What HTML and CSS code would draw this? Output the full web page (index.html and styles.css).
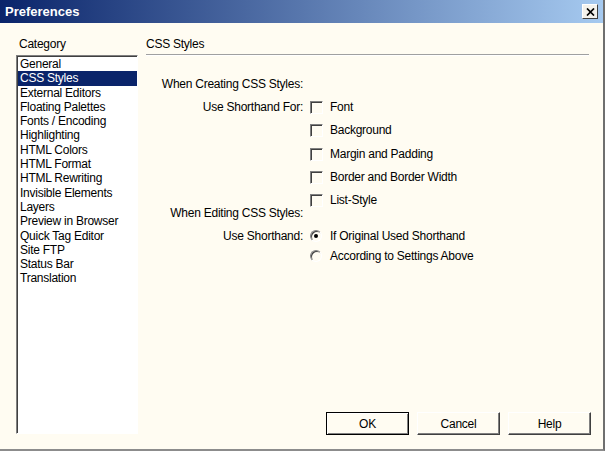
FILE: index.html
```html
<!DOCTYPE html>
<html lang="en">

<head>
    <meta charset="UTF-8">
    <meta name="viewport" content="width=device-width, initial-scale=1.0">
    <title>Preferences</title>
    <link rel="stylesheet" href="styles.css">
</head>

<body>
    <div class="window">
        <!-- Title bar -->
        <div class="titlebar">
            <span class="title">Preferences</span>
            <span class="close">
                <svg width="9" height="8" viewBox="0 0 9 8">
                    <path d="M1 0.5 L8 7.5 M8 0.5 L1 7.5" stroke="#000" stroke-width="1.7" fill="none" />
                </svg>
            </span>
        </div>

        <div class="content">
            <!-- Category list -->
            <div class="sidebar">
                <div class="caption">Category</div>
                <ul class="list">
                    <li>General</li>
                    <li class="selected">CSS Styles</li>
                    <li>External Editors</li>
                    <li>Floating Palettes</li>
                    <li>Fonts / Encoding</li>
                    <li>Highlighting</li>
                    <li>HTML Colors</li>
                    <li>HTML Format</li>
                    <li>HTML Rewriting</li>
                    <li>Invisible Elements</li>
                    <li>Layers</li>
                    <li>Preview in Browser</li>
                    <li>Quick Tag Editor</li>
                    <li>Site FTP</li>
                    <li>Status Bar</li>
                    <li>Translation</li>
                </ul>
            </div>

            <!-- Settings panel -->
            <div class="panel">
                <div class="panel-title">CSS Styles</div>

                <div class="form">
                    <div class="row">
                        <span class="label">When Creating CSS Styles:</span>
                    </div>
                    <div class="row">
                        <span class="label">Use Shorthand For:</span>
                        <span class="check"></span>
                        <span>Font</span>
                    </div>
                    <div class="row">
                        <span class="label"></span>
                        <span class="check"></span>
                        <span>Background</span>
                    </div>
                    <div class="row row-wide">
                        <span class="label"></span>
                        <span class="check"></span>
                        <span>Margin and Padding</span>
                    </div>
                    <div class="row">
                        <span class="label"></span>
                        <span class="check"></span>
                        <span>Border and Border Width</span>
                    </div>
                    <div class="row">
                        <span class="label"></span>
                        <span class="check"></span>
                        <span>List-Style</span>
                    </div>
                    <div class="row row-overlap">
                        <span class="label">When Editing CSS Styles:</span>
                    </div>
                    <div class="row">
                        <span class="label">Use Shorthand:</span>
                        <span class="radio on"></span>
                        <span>If Original Used Shorthand</span>
                    </div>
                    <div class="row row-close">
                        <span class="label"></span>
                        <span class="radio"></span>
                        <span>According to Settings Above</span>
                    </div>
                </div>

                <div class="buttons">
                    <button class="btn default">OK</button>
                    <button class="btn">Cancel</button>
                    <button class="btn">Help</button>
                </div>
            </div>
        </div>
    </div>
</body>

</html>
```

FILE: styles.css
```css
/* Base */
* {
    box-sizing: border-box;
}

body {
    margin: 0;
    font-family: "Liberation Sans", Arial, sans-serif;
    font-size: 12px;
    letter-spacing: -0.25px;
    color: #000;
    background: #fffcf2;
}

/* Dialog window */
.window {
    width: 605px;
    height: 451px;
    display: flex;
    flex-direction: column;
    background: #fffcf2;
    border-right: 2px solid #6f6f6f;
    border-bottom: 2px solid #8c8c8c;
}

/* Title bar */
.titlebar {
    flex: none;
    height: 23px;
    display: flex;
    align-items: center;
    justify-content: space-between;
    padding: 0 5px;
    background: linear-gradient(to right, #0a246a, #a6caf0);
}

.title {
    color: #fff;
    font-weight: bold;
    font-size: 13px;
    letter-spacing: 0;
}

.close {
    width: 16px;
    height: 15px;
    display: flex;
    align-items: center;
    justify-content: center;
    background: #f4f2ec;
    border: 1px solid;
    border-color: #fff #404040 #404040 #fff;
}

/* Main area */
.content {
    flex: 1;
    display: flex;
    gap: 8px;
    padding: 14px 12px 14px 16px;
}

/* Category list */
.sidebar {
    width: 122px;
    flex: none;
    display: flex;
    flex-direction: column;
}

.caption {
    line-height: 14px;
    padding-left: 3px;
}

.list {
    flex: 1;
    list-style: none;
    margin: 4px 0 1px;
    padding: 1px 0 0 1px;
    background: #fff;
    border: 1px solid;
    border-color: #808080 #fff #fff #808080;
    box-shadow: inset 1px 1px 0 #404040;
}

.list li {
    line-height: 14.3px;
    padding-left: 2px;
    white-space: nowrap;
}

.list li.selected {
    background: #0a246a;
    color: #fff;
}

/* Settings panel */
.panel {
    flex: 1;
    display: flex;
    flex-direction: column;
}

.panel-title {
    line-height: 14px;
    padding-bottom: 3px;
    margin-right: 2px;
    border-bottom: 1px solid #a0a0a0;
    box-shadow: 0 1px 0 #fff;
}

.form {
    margin-top: 22px;
}

.row {
    display: flex;
    align-items: center;
    height: 14px;
    line-height: 14px;
    margin-top: 9px;
    white-space: nowrap;
}

.row:first-child {
    margin-top: 0;
}

.row-wide {
    margin-top: 10px;
}

.row-overlap {
    margin-top: -1px;
}

.row-close {
    margin-top: 6px;
}

.label {
    width: 157px;
    flex: none;
    text-align: right;
}

/* Checkbox */
.check {
    width: 13px;
    height: 13px;
    flex: none;
    margin: 0 7px;
    border: 1px solid;
    border-color: #808080 #fff #fff #808080;
    box-shadow: inset 1px 1px 0 #404040;
}

/* Radio button */
.radio {
    width: 12px;
    height: 12px;
    flex: none;
    margin: 0 8px 0 7px;
    display: flex;
    align-items: center;
    justify-content: center;
    border-radius: 50%;
    border: 1px solid;
    border-color: #808080 #fff #fff #808080;
    box-shadow: inset 1px 1px 0 #404040;
}

.radio.on::after {
    content: "";
    width: 4px;
    height: 4px;
    border-radius: 50%;
    background: #000;
}

/* Buttons */
.buttons {
    margin-top: auto;
    display: flex;
    justify-content: flex-end;
    gap: 8px;
}

.btn {
    width: 83px;
    height: 23px;
    padding: 0;
    font: inherit;
    letter-spacing: inherit;
    color: #000;
    background: #fffcf2;
    border: 1px solid;
    border-color: #fff #404040 #404040 #fff;
    box-shadow: inset -1px -1px 0 #808080;
}

.btn.default {
    border-color: #000;
    box-shadow: inset 1px 1px 0 #fff, inset -1px -1px 0 #808080;
}
```
